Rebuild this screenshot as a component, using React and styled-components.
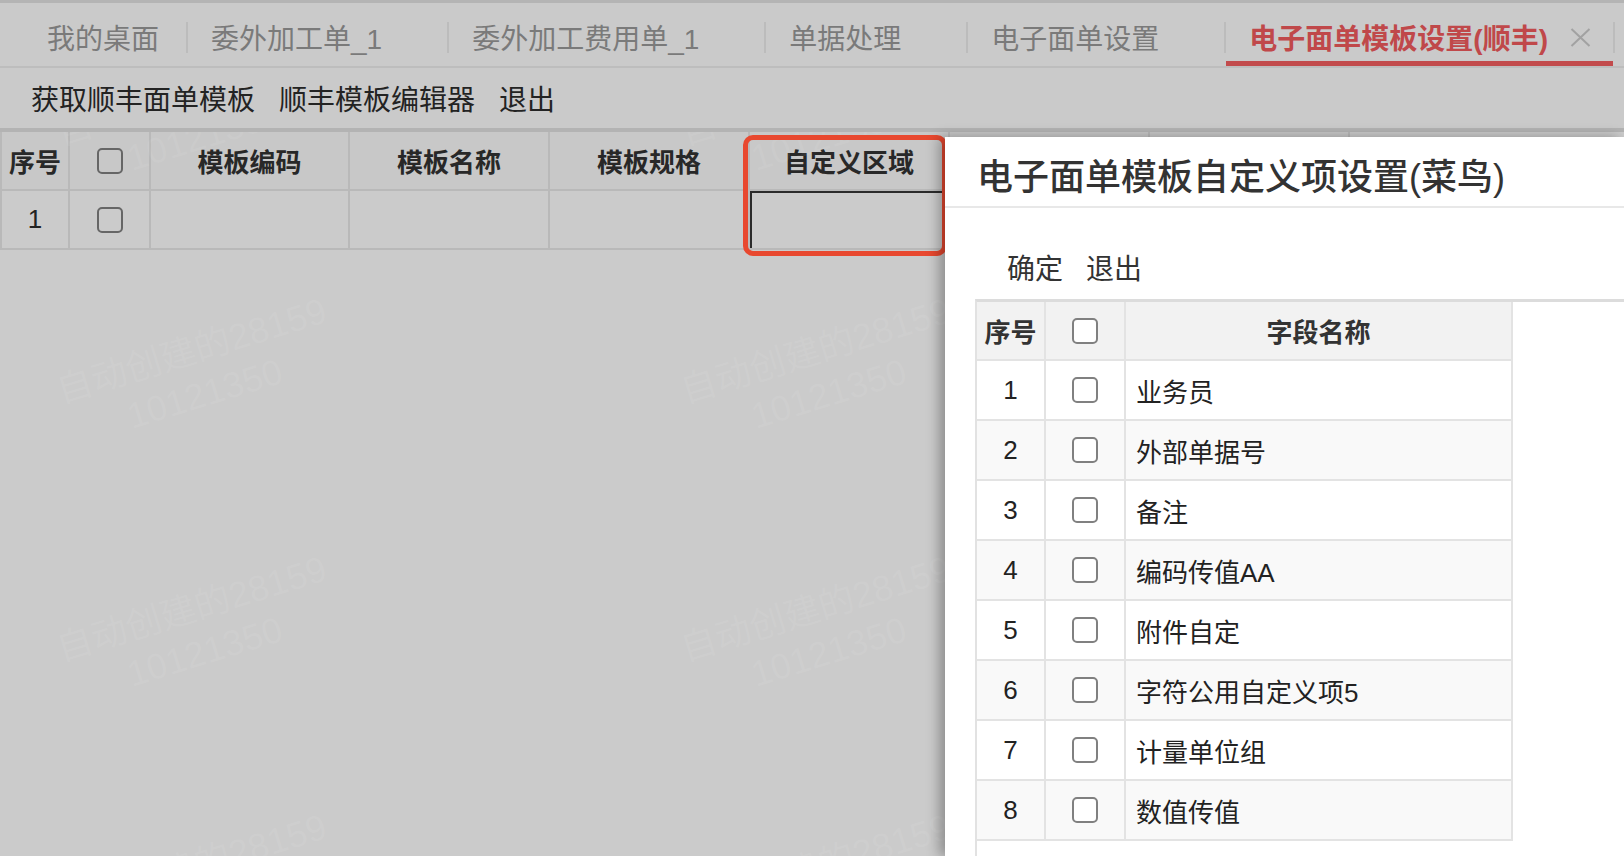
import styled, { createGlobalStyle } from "styled-components";

const GlobalStyle = createGlobalStyle`
  html, body {
    margin: 0;
    padding: 0;
  }
  body {
    font-family: "Liberation Sans", "Noto Sans CJK SC", sans-serif;
    background: #cbcbcb;
  }
  * {
    box-sizing: border-box;
  }
`;

const tabs = [
  { label: "我的桌面", closable: false },
  { label: "委外加工单_1", closable: true },
  { label: "委外加工费用单_1", closable: true },
  { label: "单据处理", closable: true },
  { label: "电子面单设置", closable: true },
  { label: "电子面单模板设置(顺丰)", closable: true, active: true },
];

const mainColumns = ["模板编码", "模板名称", "模板规格", "自定义区域", "", ""];

const fields = [
  "业务员",
  "外部单据号",
  "备注",
  "编码传值AA",
  "附件自定",
  "字符公用自定义项5",
  "计量单位组",
  "数值传值",
];

const CloseIcon = () => (
  <svg width="21" height="19" viewBox="0 0 21 19">
    <path d="M1.5 1 L19.5 18 M19.5 1 L1.5 18" stroke="#a2a2a2" strokeWidth="2" fill="none" />
  </svg>
);

const App = () => {
  return (
    <Page>
      <GlobalStyle />
      <TabBar>
        {tabs.map((t) => (
          <TabGroup key={t.label}>
            <Tab $active={t.active} $closable={t.closable}>
              {t.label}
              {t.closable && (
                <Close $visible={t.active}>
                  <CloseIcon />
                </Close>
              )}
            </Tab>
            <Separator />
          </TabGroup>
        ))}
      </TabBar>

      <Toolbar>
        <ToolButton>获取顺丰面单模板</ToolButton>
        <ToolButton>顺丰模板编辑器</ToolButton>
        <ToolButton>退出</ToolButton>
      </Toolbar>

      <MainGrid>
        <MainHead>序号</MainHead>
        <MainHead>
          <Box $dim />
        </MainHead>
        {mainColumns.map((c, i) => (
          <MainHead key={i}>{c}</MainHead>
        ))}
        <MainCell>1</MainCell>
        <MainCell>
          <Box $dim />
        </MainCell>
        <MainCell />
        <MainCell />
        <MainCell />
        <MainCell $focused />
        <MainCell />
        <MainCell />
      </MainGrid>

      <WatermarkLayer>
        <WatermarkGrid>
          {Array.from({ length: 12 }).map((_, i) => (
            <Watermark key={i}>
              自动创建的28159
              <br />
              10121350
            </Watermark>
          ))}
        </WatermarkGrid>
      </WatermarkLayer>

      <Highlight />

      <Drawer>
        <DrawerHeader>电子面单模板自定义项设置(菜鸟)</DrawerHeader>
        <DrawerToolbar>
          <DrawerButton>确定</DrawerButton>
          <DrawerButton>退出</DrawerButton>
        </DrawerToolbar>
        <GridWrap>
          <FieldGrid>
            <FieldHead>序号</FieldHead>
            <FieldHead>
              <Box />
            </FieldHead>
            <FieldHead>字段名称</FieldHead>
            {fields.map((f, i) => (
              <FieldRow key={f} $even={i % 2 === 1}>
                <FieldCell>{i + 1}</FieldCell>
                <FieldCell>
                  <Box />
                </FieldCell>
                <FieldCell $left>{f}</FieldCell>
              </FieldRow>
            ))}
          </FieldGrid>
        </GridWrap>
      </Drawer>
    </Page>
  );
};

const Page = styled.div`
  position: relative;
  width: 1624px;
  height: 856px;
  overflow: hidden;
  background: #cbcbcb;
`;

const TabBar = styled.div`
  display: flex;
  height: 68px;
  padding-left: 24px;
  background: #cacaca;
  border-top: 3px solid #b4b4b4;
  border-bottom: 2px solid #bdbdbd;
`;

const TabGroup = styled.div`
  display: flex;
  height: 100%;
`;

const Tab = styled.div`
  display: flex;
  align-items: center;
  height: 100%;
  padding: 5px ${(p) => (p.$closable ? "22px" : "27px")} 0 23px;
  font-size: 28px;
  white-space: nowrap;
  color: ${(p) => (p.$active ? "#c0484a" : "#7a7a7a")};
  font-weight: ${(p) => (p.$active ? 700 : 400)};
  box-shadow: ${(p) => (p.$active ? "inset 0 -5px 0 #c24b4c" : "none")};
`;

const Close = styled.span`
  display: flex;
  width: 21px;
  height: 19px;
  margin-left: 22px;
  visibility: ${(p) => (p.$visible ? "visible" : "hidden")};
`;

const Separator = styled.div`
  width: 2px;
  height: 31px;
  margin-top: 19px;
  background: #bcbcbc;
`;

const Toolbar = styled.div`
  display: flex;
  align-items: center;
  gap: 24px;
  height: 64px;
  padding-left: 31px;
  background: #cacaca;
  border-bottom: 4px solid #b3b3b3;
`;

const ToolButton = styled.span`
  font-size: 28px;
  color: #232323;
`;

const MainGrid = styled.div`
  display: grid;
  grid-template-columns: 68px 81px 199px 200px 200px 200px 200px 200px;
  grid-auto-rows: 59px;
  width: fit-content;
  border-left: 2px solid #b9b9b9;
`;

const MainHead = styled.div`
  display: flex;
  align-items: center;
  justify-content: center;
  background: #c8c8c8;
  border-right: 2px solid #b9b9b9;
  border-bottom: 2px solid #b9b9b9;
  font-size: 26px;
  font-weight: 700;
  color: #282828;
`;

const MainCell = styled.div`
  display: flex;
  align-items: center;
  justify-content: center;
  background: #cbcbcb;
  border-right: 2px solid #b9b9b9;
  border-bottom: 2px solid #b9b9b9;
  font-size: 26px;
  color: #222;
  box-shadow: ${(p) => (p.$focused ? "inset 2px 2px 0 #2b2b2b" : "none")};
`;

const Box = styled.span`
  display: block;
  width: 26px;
  height: 26px;
  border: 2px solid ${(p) => (p.$dim ? "#666" : "#808080")};
  border-radius: 5px;
  background: ${(p) => (p.$dim ? "transparent" : "#fff")};
`;

const WatermarkLayer = styled.div`
  position: absolute;
  top: 132px;
  left: 0;
  width: 945px;
  bottom: 0;
  overflow: hidden;
  pointer-events: none;
`;

const WatermarkGrid = styled.div`
  display: grid;
  grid-template-columns: repeat(3, 624px);
  grid-auto-rows: 258px;
  margin-top: -147px;
  padding-left: 48px;
`;

const Watermark = styled.div`
  align-self: center;
  width: 300px;
  text-align: center;
  font-size: 36px;
  line-height: 1.25;
  color: rgba(255, 255, 255, 0.07);
  transform: rotate(-17deg);
  white-space: nowrap;
`;

const Highlight = styled.div`
  position: absolute;
  left: 743px;
  top: 135px;
  width: 204px;
  height: 121px;
  border: 5px solid #e8482f;
  border-radius: 10px;
`;

const Drawer = styled.div`
  position: absolute;
  top: 137px;
  left: 945px;
  right: 0;
  bottom: 0;
  display: flex;
  flex-direction: column;
  background: #fff;
  box-shadow: -6px 0 12px rgba(0, 0, 0, 0.3);
`;

const DrawerHeader = styled.div`
  display: flex;
  align-items: center;
  height: 71px;
  padding: 4px 0 0 32px;
  border-bottom: 2px solid #e8e8e8;
  font-size: 36px;
  font-weight: 500;
  color: #333;
`;

const DrawerToolbar = styled.div`
  display: flex;
  align-items: flex-end;
  gap: 23px;
  height: 91px;
  padding: 0 0 11px 62px;
`;

const DrawerButton = styled.span`
  font-size: 28px;
  line-height: 36px;
  color: #333;
`;

const GridWrap = styled.div`
  flex: 1;
  margin-left: 30px;
  border-top: 3px solid #dcdcdc;
  border-left: 2px solid #e2e2e2;
`;

const FieldGrid = styled.div`
  display: grid;
  grid-template-columns: 69px 80px 387px;
  grid-template-rows: 59px;
  grid-auto-rows: 60px;
  width: fit-content;
`;

const FieldRow = styled.div`
  display: contents;
  & > div {
    background: ${(p) => (p.$even ? "#f9f9f9" : "#fff")};
  }
`;

const FieldHead = styled.div`
  display: flex;
  align-items: center;
  justify-content: center;
  background: #f2f2f2;
  border-right: 2px solid #e3e3e3;
  border-bottom: 2px solid #e3e3e3;
  font-size: 26px;
  font-weight: 700;
  color: #333;
`;

const FieldCell = styled.div`
  display: flex;
  align-items: center;
  justify-content: ${(p) => (p.$left ? "flex-start" : "center")};
  padding-left: ${(p) => (p.$left ? "10px" : "0")};
  border-right: 2px solid #e3e3e3;
  border-bottom: 2px solid #e3e3e3;
  font-size: 26px;
  color: #222;
`;

export default App;
